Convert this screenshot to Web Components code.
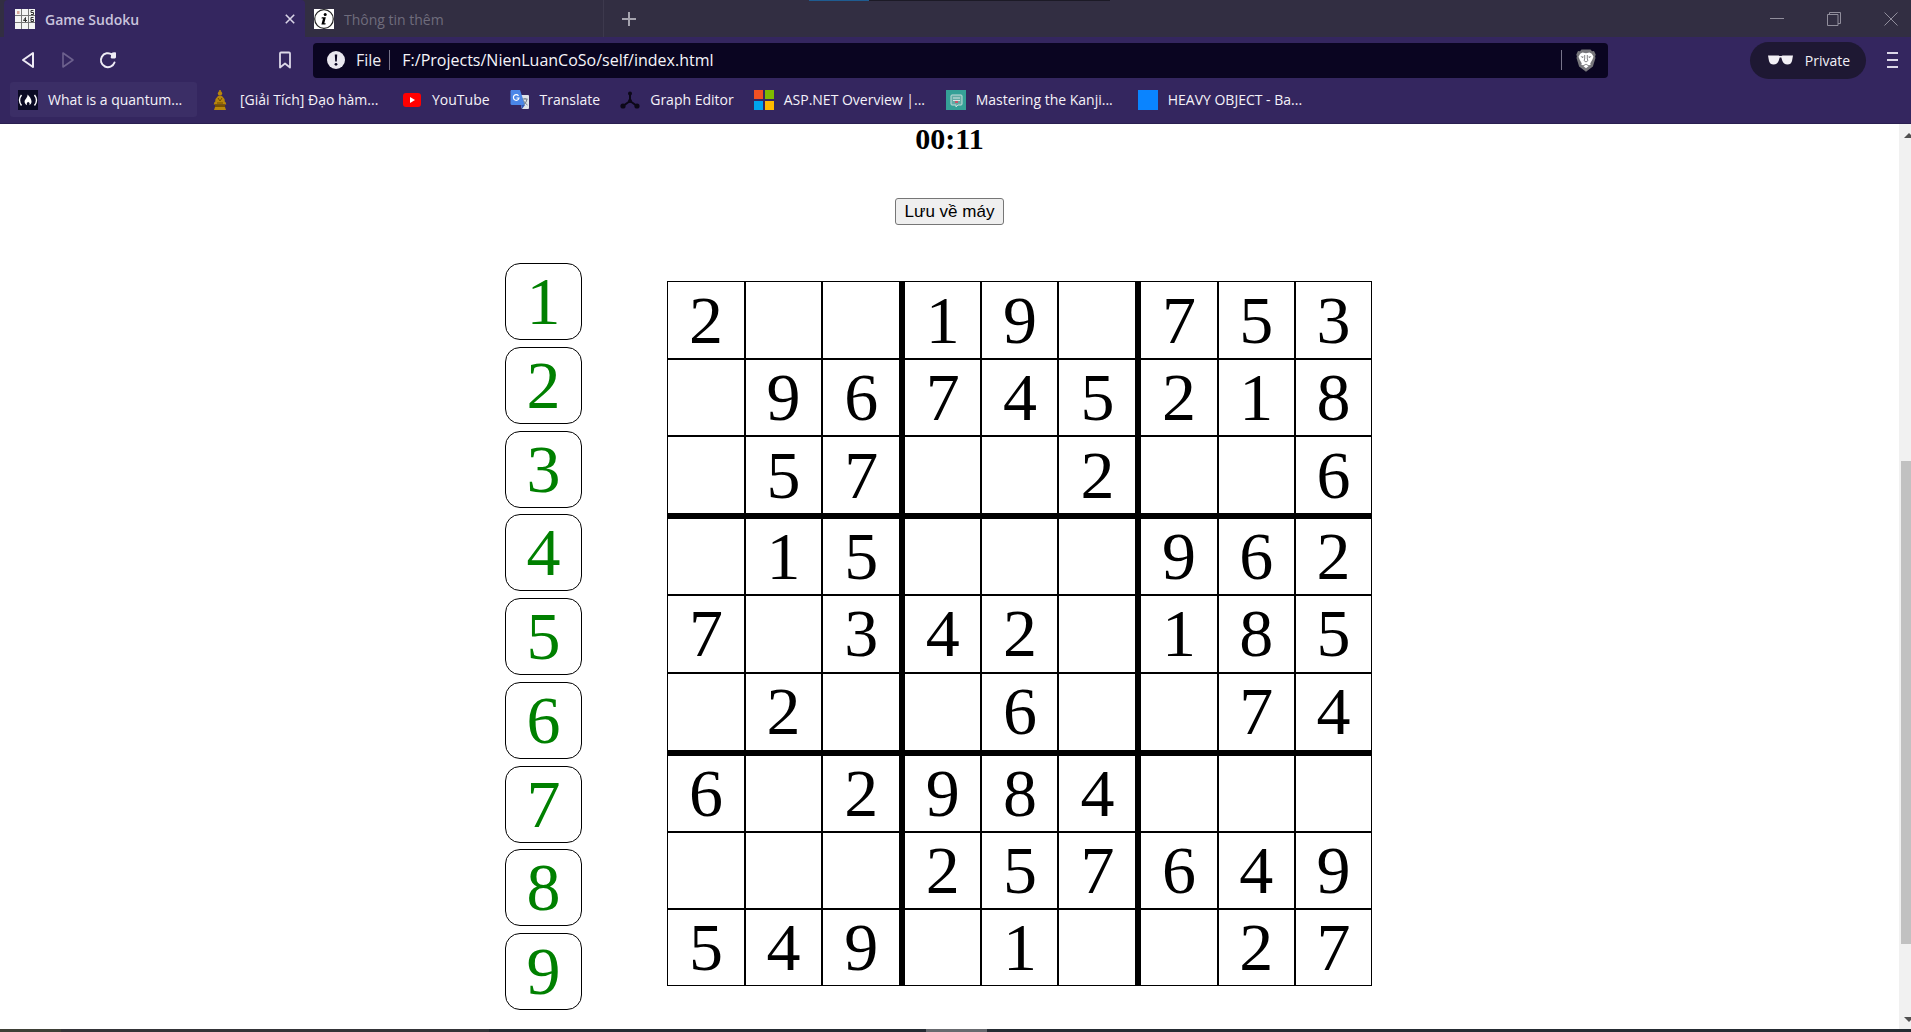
<!DOCTYPE html>
<html lang="vi">
<head>
<meta charset="utf-8">
<title>Game Sudoku</title>
<style>
html,body{margin:0;height:100%}
body{background:#fff;overflow:hidden}
</style>
</head>
<body>
<app-window></app-window>
<script>
const define=(name,html,init)=>customElements.define(name,class extends HTMLElement{
  constructor(){super();const t=document.createElement('template');t.innerHTML=html;
    this.attachShadow({mode:'open'}).append(t.content.cloneNode(true));}
  connectedCallback(){if(init&&!this.ready){this.ready=true;init(this,this.shadowRoot);}}
});
const reset=`:host,*{box-sizing:border-box}button{font:inherit;color:inherit;background:none;border:0;padding:0;margin:0;display:flex;align-items:center;justify-content:center}svg{display:block;flex:none}`;

/* ---- icons ---- */
const icons={
 sudoku:`<svg width="20" height="20" viewBox="0 0 20 20"><path fill="#f4f4f4" d="M0 0h20v20H0z"/><path d="M6.500 0v20M13.500 0v20M0 6.500h20M0 13.500h20" stroke="#777" stroke-width="1"/><path d="M2 2h2.500v3H2z" fill="#d9a79a"/><path d="M18.500 1.500H16v2h2.500v2H16M10.500 13V8.500L8.500 11.500h3.500M18.500 8.500H16v4h2.500v-2H16" fill="none" stroke="#333"/></svg>`,
 info:`<svg width="20" height="20" viewBox="0 0 20 20"><path fill="#fff" d="M0 0h20v20H0z"/><circle cx="10" cy="10" r="9.300" fill="#fff" stroke="#222" stroke-width="1.200"/><circle cx="11.200" cy="5.500" r="1.500"/><path d="M7.800 8.300h4l-1.500 6h1.400l-.3 1.200H7.400l1.600-6H7.500z"/></svg>`,
 freecode:`<svg width="20" height="20" viewBox="0 0 20 20"><path fill="#0a0a23" d="M0 0h20v20H0z"/><path d="M3.500 5Q-.5 10 3.500 15.500M16.500 5q4 5 0 10.500" fill="none" stroke="#fff" stroke-width="1.400"/><path d="M9.500 4.500c2 2 4 4.500 4 7 0 1.600-.8 3-2.200 3.700.7-1.400.4-2.200-.7-3.500-.3 1-.8.9-1 .2-.8 1-1.200 2-.4 3.300-1.600-.7-2.600-1.900-2.600-3.500C6.600 9 9.800 8 9.500 4.500z" fill="#fff"/></svg>`,
 buddha:`<svg width="20" height="20" viewBox="0 0 20 20"><g fill="#b8860b"><path d="M9.200 0h1.600v2H9.200z"/><circle cx="10" cy="3.500" r="2.200"/><path d="M8 6h4l2.500 3 .5 4H5l.5-4zM4.500 12h11l.8 2.500H3.700zM5 17h10l1 3H4z"/></g><path d="M5 14.500h10V17H5z" fill="#765000"/><path d="M8 8l2 3 2-3m-5 5h6" fill="none" stroke="#704d00"/></svg>`,
 youtube:`<svg width="20" height="20" viewBox="0 0 20 20"><rect x="1" y="3" width="18" height="14" rx="3" fill="#f00"/><path d="M8 7l5 3-5 3z" fill="#fff"/></svg>`,
 translate:`<svg width="20" height="20" viewBox="0 0 20 20"><path d="M8 5h10a1 1 0 0 1 1 1v12a1 1 0 0 1-1 1h-6z" fill="#dfe3e8"/><path d="M1 0h9l5 15H2a1.500 1.500 0 0 1-1.500-1.500v-12z" fill="#4a86e8"/><path d="M11 15h4l-3 4z" fill="#3057b5"/><path d="M8.500 5.800A2.800 2.800 0 1 0 9 8H6.500" fill="none" stroke="#fff" stroke-width="1.200"/><path d="M12.500 9h5m-2.500-1v1m2 0c-.5 3-2 4.500-3.500 5.500m0-4c1 2 2 3 4 4.500" fill="none" stroke="#6b7885"/></svg>`,
 graph:`<svg width="20" height="20" viewBox="0 0 20 20"><path d="M10 3v8L3 16m7-5l7 5" fill="none" stroke="#0c0818" stroke-width="2"/><g fill="#0c0818"><circle cx="10" cy="3.500" r="2"/><circle cx="3" cy="16" r="2.600"/><circle cx="17" cy="16" r="2.600"/><circle cx="10" cy="11" r="2"/></g></svg>`,
 microsoft:`<svg width="20" height="20" viewBox="0 0 20 20"><path fill="#f25022" d="M0 0h9v9H0z"/><path fill="#7fba00" d="M11 0h9v9h-9z"/><path fill="#00a4ef" d="M0 11h9v9H0z"/><path fill="#ffb900" d="M11 11h9v9h-9z"/></svg>`,
 kanji:`<svg width="20" height="20" viewBox="0 0 20 20"><path fill="#35a097" d="M0 0h20v20H0z"/><path d="M6 5h9q1 0 1 1v8q0 1-1 1h-3l-2 2v-2H6q-1 0-1-1V6q0-1 1-1z" fill="#62aaa4" stroke="#c4dcda"/><path d="M7 8h7M7 10.500h7" stroke="#d8e5e4"/><path d="M9 11h3v2H9z" fill="#c9566b"/></svg>`,
 blue:`<svg width="20" height="20" viewBox="0 0 20 20"><path fill="#0a84ff" d="M0 0h20v20H0z"/></svg>`
};

define('fav-icon',`<style>:host{display:block;flex:none}svg{display:block}</style>`,(el,r)=>{r.innerHTML+=icons[el.getAttribute('name')];});

define('browser-tab',`<style>${reset}
:host{display:flex;align-items:center;gap:10px;width:299px;padding:1px 10px 0 9px;height:37px;color:#6f6c7c;font-size:14px;border-right:1px solid #3d394d}
:host([active]){width:301px;margin-left:4px;padding:1px 9px 0 11px;background:#34265f;color:#c9c3dc;font-weight:600;border:0;border-radius:4px 4px 0 0}
.t{flex:1}button{display:none;width:12px;height:20px}:host([active]) button{display:flex}</style>
<slot name="icon"></slot><span class="t"><slot></slot></span><button aria-label="Close tab"><svg width="10" height="10" viewBox="0 0 10 10"><path d="M.8.8l8.400 8.400M9.200.8L.8 9.200" stroke="#d8d3e6" stroke-width="1.600"/></svg></button>`);

define('tab-strip',`<style>${reset}
:host{display:flex;height:37px;background:#322e42;position:relative}
.plus{width:50px;height:37px}
.win{margin-left:auto;display:flex;gap:43px;padding-right:13px}.win button{width:14px;height:37px}
.peek{position:absolute;left:809px;top:0;width:301px;height:1px;background:linear-gradient(90deg,#1f5c91 60px,#1c1a26 60px)}</style>
<browser-tab active><fav-icon slot="icon" name="sudoku"></fav-icon>Game Sudoku</browser-tab>
<browser-tab><fav-icon slot="icon" name="info"></fav-icon>Thông tin thêm</browser-tab>
<button class="plus" aria-label="New tab"><svg width="14" height="14" viewBox="0 0 14 14"><path d="M7 0v14M0 7h14" stroke="#a5a3ae" stroke-width="2"/></svg></button>
<div class="win">
<button aria-label="Minimize"><svg width="14" height="14" viewBox="0 0 14 14"><path d="M0 6.500h14" stroke="#918e9c"/></svg></button>
<button aria-label="Restore"><svg width="14" height="14" viewBox="0 0 14 14"><path d="M.5 2.500h10.500v11H.5zM2.500 2.500v-2h11v11h-2.500" fill="none" stroke="#918e9c"/></svg></button>
<button aria-label="Close window"><svg width="14" height="14" viewBox="0 0 14 14"><path d="M.5.5l13 13M13.500.5l-13 13" stroke="#918e9c"/></svg></button></div>
<div class="peek"></div>`);

define('address-bar',`<style>${reset}
:host{display:flex;align-items:center;flex:1;height:35px;border-radius:4px;background:#0a0521;padding:0 12px 0 14px;color:#eeecf3;font-size:16px}
.file{margin:0 8px 0 11px}i{width:1px;height:20px;background:#77738a}
input{flex:1;min-width:0;font:inherit;color:#f6f5fa;background:none;border:0;outline:0;padding:0;margin:0 12px}
i+button{margin-left:14px}</style>
<svg width="18" height="18" viewBox="0 0 18 18"><circle cx="9" cy="9" r="9" fill="#e9e7ef"/><path d="M7.800 3.500h2.400L9.800 10.500H8.200z" fill="#0a0521"/><circle cx="9" cy="13.300" r="1.400" fill="#0a0521"/></svg>
<label class="file" for="u">File</label><i></i><input id="u" value="F:/Projects/NienLuanCoSo/self/index.html"><i></i>
<button aria-label="Brave Shields"><svg width="20" height="23" viewBox="0 0 20 23"><path d="M5.500.5h9l1.500 1.700 2-.2 1.700 3.600-.6 2 .4 1.500-2.600 8.400L10 22.800 3.100 17.500.5 9.100l.4-1.500-.6-2L2 2l2 .2z" fill="#77767b"/><path d="M6.500 3.500l3.500.7 3.500-.7 2.300 1.300 1.700 3-1.200 3-2 3.500.3 1.700-2 .3-2.600-1.500-2.600 1.500-2-.3.3-1.700-2-3.500-1.200-3 1.700-3zM7.500 17.200l2.500-1.700 2.500 1.700-2.500 2z" fill="#fff"/><path d="M4.500 7.300l3.500.4-1.500 1.200zM15.500 7.300l-3.500.4 1.500 1.200z" fill="#77767b"/><path d="M8.700 6v4L8 11.500l2 1.500 2-1.500-.7-1.500V6" fill="none" stroke="#77767b" stroke-width=".9"/></svg></button>`);

define('tool-bar',`<style>${reset}
:host{display:flex;align-items:center;height:45px;padding:1px 13px 0 20px;color:#f2f0f7}
.nav{display:flex;gap:24px;width:293px}.nav button{width:16px;height:32px}.nav .mark{margin-left:auto;margin-right:20px}
.pill{margin-left:142px;width:116px;height:37px;border-radius:19px;background:#1e1833;font-size:14px;gap:12px;padding-left:2px}
.menu{width:11px;height:32px;margin-left:21px}</style>
<div class="nav">
<button aria-label="Back"><svg width="16" height="18" viewBox="0 0 16 18"><path d="M13 2v14L3 9z" fill="none" stroke="#eeebf5" stroke-width="2" stroke-linejoin="round"/></svg></button>
<button aria-label="Forward"><svg width="16" height="18" viewBox="0 0 16 18"><path d="M3 2v14l10-7z" fill="none" stroke="#6d618e" stroke-width="1.600" stroke-linejoin="round"/></svg></button>
<button aria-label="Reload"><svg width="18" height="18" viewBox="0 0 18 18"><path d="M15.500 11.500A7 7 0 1 1 13 3.500" fill="none" stroke="#eeebf5" stroke-width="2" stroke-linecap="round"/><path d="M12 2.500Q14.500 .5 17 1.500v5l-1 1h-3.500q-1.500-1-.5-2.500z" fill="#eeebf5"/></svg></button>
<button class="mark" aria-label="Bookmark"><svg width="14" height="18" viewBox="0 0 14 18"><path d="M2 2.500q0-1 1-1h8q1 0 1 1v14l-5-4-5 4z" fill="none" stroke="#dcd8e8" stroke-width="1.800" stroke-linejoin="round"/></svg></button>
</div>
<address-bar></address-bar>
<button class="pill"><svg width="25" height="10" viewBox="0 0 25 10"><path d="M0 .5h10.500q2 1 4 0H25L24 6Q23 9.500 19.500 9.500 15.500 9.500 14.200 5.500L13.300 2.500h-1.600L10.800 5.500Q9.500 9.500 5.500 9.500 2 9.500 1 6z" fill="#f2f0f5"/></svg>Private</button>
<button class="menu" aria-label="Menu"><svg width="11" height="16" viewBox="0 0 11 16"><path d="M0 1h11M0 8h11M0 15h11" stroke="#dcd8e8" stroke-width="2"/></svg></button>`);

define('book-mark',`<style>:host{display:block}
a{display:flex;align-items:center;gap:10px;height:35px;padding:0 7px 0 8px;box-sizing:border-box;color:#f4f2f9;text-decoration:none;white-space:nowrap;font-size:14px;border-radius:3px}
:host([long]) a{width:187px}:host([hover]) a{background:#3b2e66}</style><a href="#"><fav-icon></fav-icon><slot></slot></a>`,(el,r)=>{const f=document.createElement('fav-icon');f.setAttribute('name',el.getAttribute('icon'));r.querySelector('fav-icon').replaceWith(f);});

define('bookmarks-bar',`<style>:host{display:flex;gap:5px;height:42px;padding-left:10px;box-sizing:border-box;border-bottom:1px solid #2a1f50}</style>
<book-mark icon="freecode" long hover>What is a quantum...</book-mark>
<book-mark icon="buddha" long>[Giải Tích] Đạo hàm...</book-mark>
<book-mark icon="youtube">YouTube</book-mark>
<book-mark icon="translate">Translate</book-mark>
<book-mark icon="graph">Graph Editor</book-mark>
<book-mark icon="microsoft" long>ASP.NET Overview |...</book-mark>
<book-mark icon="kanji" long>Mastering the Kanji...</book-mark>
<book-mark icon="blue" long>HEAVY OBJECT - Ba...</book-mark>`);

/* ---- game ---- */
define('number-palette',`<style>${reset}
:host{display:flex;flex-direction:column;justify-content:space-between;height:747px}
button{width:77px;height:77px;border:1px solid #000;border-radius:15px;color:green;font-size:68px;line-height:75px}</style>`,(el,r)=>{
  for(let n=1;n<10;n++){const b=document.createElement('button');b.textContent=n;r.append(b);}
});

define('sudoku-board',`<style>
:host{display:block}
table{border-collapse:separate;border-spacing:0;table-layout:fixed;width:705px;height:705px}
td{box-sizing:border-box;height:77px;border:1px solid #000;padding:0;text-align:center;vertical-align:middle;font-size:68px;line-height:75px}
.first{width:78px}.wide{width:82px}td:nth-child(3),td:nth-child(6){border-right-width:5px}
tr:first-child td{height:78px}
tr:nth-child(3) td,tr:nth-child(6) td{border-bottom-width:5px;height:82px}</style>
<table><colgroup><col class="first"><col><col class="wide"><col><col><col class="wide"><col><col><col></colgroup><tbody></tbody></table>`,(el,r)=>{
  const body=r.querySelector('tbody');
  for(const row of el.getAttribute('puzzle').split(' ')){
    const tr=document.createElement('tr');
    for(const c of row){const td=document.createElement('td');td.textContent=c==='.'?'':c;tr.append(td);}
    body.append(tr);
  }
});

define('sudoku-game',`<style>${reset}
:host{display:flex;flex-direction:column;align-items:center;flex:1;color:#000;font-family:"Liberation Serif",serif}
h2{margin:0 0 44px;font-size:30px;line-height:30px}
.save{font-family:"Liberation Sans",sans-serif;font-size:17px;line-height:19px;height:27px;width:109px;border:1px solid #767676;border-radius:3px;background:#efefef;margin-bottom:38px}
.play{display:flex;align-items:flex-start;gap:85px;padding-right:22px}
sudoku-board{margin-top:18px}</style>
<h2>00:11</h2><button class="save">Lưu về máy</button>
<div class="play"><number-palette></number-palette>
<sudoku-board puzzle="2..19.753 .96745218 .57..2..6 .15...962 7.342.185 .2..6..74 6.2984... ...257649 549.1..27"></sudoku-board></div>`);

define('scroll-bar',`<style>:host{display:flex;flex-direction:column;width:12px;background:#f1f1f1;overflow:hidden;padding:9px 0 7px 2px;box-sizing:border-box}
.thumb{height:483px;background:#c1c1c1}.gap{flex:324 0 0}.end{flex:73 0 0}svg{display:block;flex:none;margin-left:3px}</style>
<svg width="10" height="5" viewBox="0 0 10 5"><path d="M0 5l5-5 5 5z" fill="#505050"/></svg><div class="gap"></div><div class="thumb"></div><div class="end"></div><svg width="10" height="5" viewBox="0 0 10 5"><path d="M0 0l5 5 5-5z" fill="#505050"/></svg>`);

define('task-edge',`<style>:host{display:flex;height:3px;background:#252b32}
b{height:3px}b:nth-of-type(1){width:61px;background:#3e4036}b:nth-of-type(2){width:428px;background:#343438}b:nth-of-type(3){margin-left:437px;width:61px;background:#686a6f}</style><b></b><b></b><b></b>`);

define('app-window',`<style>
:host{display:flex;flex-direction:column;height:100vh;font-family:"Open Sans","Noto Sans",sans-serif}
header{background:#34265f;flex:none}.view{flex:1;display:flex;min-height:0}</style>
<header><tab-strip></tab-strip><tool-bar></tool-bar><bookmarks-bar></bookmarks-bar></header>
<div class="view"><sudoku-game></sudoku-game><scroll-bar></scroll-bar></div><task-edge></task-edge>`);
</script>
</body>
</html>
